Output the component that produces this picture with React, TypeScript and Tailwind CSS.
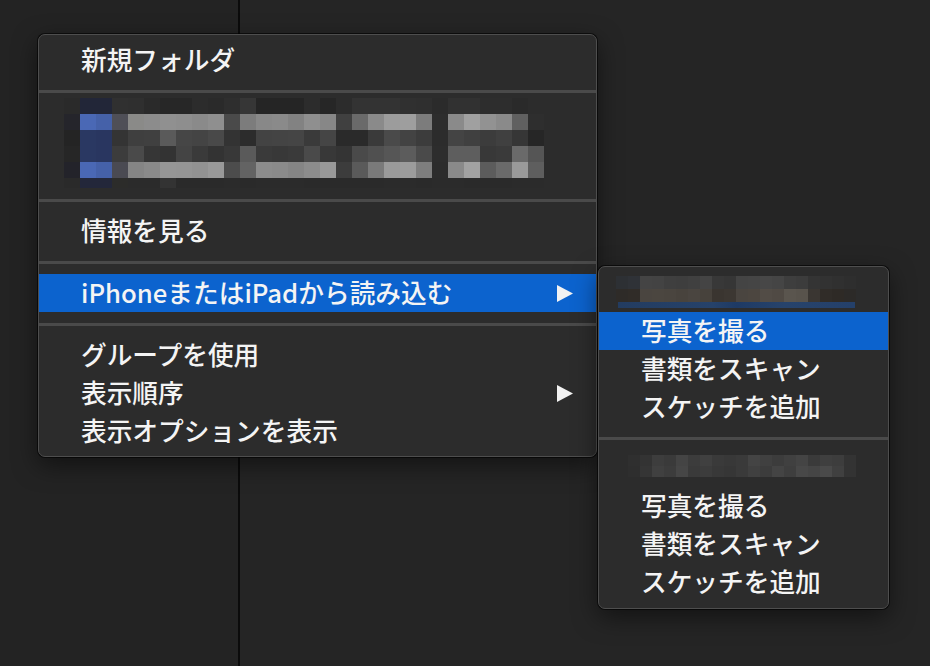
import React from "react";

const mainMosaic: string[][] = [
  ['#2a2a2a','#222638','#222638','#303030','#2f2f2f','#2a2a2a','#272727','#272727','#2c2c2c','#2a2a2a','#2e2e2e','#363636','#252525','#252525','#252525','#2c2c2c','#262626','#2c2c2c','#333333','#333333','#333333','#303030','#2f2f2f','#2b2b2b','#313131','#313131','#2d2d2d','#2d2d2d','#2a2a2a','#2c2c2c'],
  ['#25252b','#4a68b5','#4561a9','#4f4f57','#8a8a88','#8c8c8c','#909090','#8e8e8e','#8a8a8a','#8f8f8f','#4a4a4a','#7c7c7c','#888888','#8a8a8a','#828282','#8f8f8f','#878787','#404040','#6a6a6a','#8a8a8a','#9c9c9c','#9e9e9e','#7c7c7c','#2d2d2d','#8a8a8a','#a0a0a0','#929292','#8a8a8a','#606060','#2e2e2e'],
  ['#242424','#2a3862','#293660','#343434','#3f3f3f','#404040','#5a5a5a','#464646','#444444','#494949','#333333','#2c2c2c','#434343','#444444','#454545','#3a3a3a','#454545','#2a2a2a','#2a2a2a','#3a3a3a','#4a4a4a','#434343','#3c3c3c','#2c2c2c','#444444','#404040','#3c3c3c','#404040','#363636','#262626'],
  ['#262626','#2a3862','#293660','#3c3c3c','#4a4a4a','#363636','#333333','#444444','#3a3a3a','#333333','#383838','#5a5a5a','#3a3a3a','#383838','#3a3a3a','#4a4a4a','#383838','#343434','#4a4a4a','#505050','#565656','#5c5c5c','#4a4a4a','#2d2d2d','#5e5e5e','#5e5e5e','#383838','#3a3a3a','#6a6a6a','#555555'],
  ['#23232a','#4a68b5','#4561a9','#4a4a52','#858585','#8a8a8a','#969696','#959595','#929292','#999999','#4c4c4c','#636363','#8c8c8c','#8a8a8a','#858585','#8c8c8c','#999999','#3c3c3c','#5a5a5a','#7a7a7a','#9a9a9a','#9c9c9c','#7e7e7e','#2c2c2c','#8a8a8a','#a2a2a2','#5c5c5c','#6a6a6a','#9a9a9a','#5e5e5e'],
  ['#2a2a2a','#23273a','#23273a','#2c2c2a','#2b2b2b','#2b2b2b','#333333','#2a2a2a','#2a2a2a','#2a2a2a','#2b2b2b','#2a2a2a','#2b2b2b','#2b2b2b','#2b2b2b','#2a2a2a','#2a2a2a','#2a2a2a','#2a2a2a','#2a2a2a','#2b2b2b','#2b2b2b','#2a2a2a','#2b2b2b','#2b2b2b','#2a2a2a','#2a2a2a','#2a2a2a','#2b2b2b','#2b2b2b'],
];

const sub1Mosaic: string[][] = [
  ['#2d3034','#2f3237','#444444','#434343','#3f3f3f','#3e3e3e','#404040','#444444','#383838','#363636','#444444','#454545','#474747','#454545','#3e3e3e','#3c3c3c','#343434','#323232','#303030','#2e2e2e'],
  ['#2e2b28','#302c28','#4a4540','#4b4640','#4a453f','#48433d','#4a4540','#47423c','#3a3530','#3c3732','#4a4540','#4c4640','#524c46','#504a44','#5a554e','#58534c','#3a3632','#302c28','#2e2a26','#2c2a28'],
];

const sub2Mosaic: string[][] = [
  ['#2f2f2f','#333333','#3d3d3d','#3a3a3a','#444444','#3c3c3c','#404040','#3a3a3a','#383838','#3a3a3a','#444444','#404040','#3c3c3c','#404040','#444444','#3a3a3a','#3f3f3f','#3d3d3d','#333333'],
  ['#2e2e2e','#353535','#404040','#3c3c3c','#464646','#3a3a3a','#3c3c3c','#383838','#363636','#3a3a3a','#404040','#3c3c3c','#444444','#3e3e3e','#484848','#454545','#4a4a4a','#404040','#333333'],
];

function Mosaic({
  data,
  cw,
  ch,
  width,
  height,
  offsetY = 0,
}: {
  data: string[][];
  cw: number;
  ch: number;
  width: number;
  height: number;
  offsetY?: number;
}) {
  return (
    <svg width={width} height={height} viewBox={`0 0 ${width} ${height}`} className="block">
      {data.map((row, r) =>
        row.map((c, i) => (
          <rect key={`${r}-${i}`} x={i * cw} y={offsetY + r * ch} width={cw} height={ch} fill={c} />
        ))
      )}
    </svg>
  );
}

function Arrow() {
  return (
    <svg width="16" height="17" viewBox="0 0 16 17" className="block">
      <polygon points="0,0 16,8.5 0,17" fill="#f2f2f2" />
    </svg>
  );
}

function Item({
  label,
  active = false,
  arrow = false,
}: {
  label: string;
  active?: boolean;
  arrow?: boolean;
}) {
  return (
    <div
      className={`flex h-[38px] items-center justify-between pl-[42px] pr-[23px] ${
        active ? "bg-[#0c63ce]" : ""
      }`}
    >
      <span className="-mt-[2px] whitespace-nowrap leading-none">{label}</span>
      {arrow && <Arrow />}
    </div>
  );
}

function Sep({ pb = 10 }: { pb?: number }) {
  return (
    <div className={pb === 3 ? "pt-[11px] pb-[3px]" : pb === 9 ? "pt-[11px] pb-[9px]" : "pt-[11px] pb-[10px]"}>
      <div className="h-[3px] bg-[#4a4a4a]" />
    </div>
  );
}

export default function App() {
  return (
    <div className="relative flex h-[666px] w-[930px] overflow-hidden font-['Noto_Sans_CJK_JP','Noto_Sans',sans-serif] text-[25.7px] font-medium text-[#f4f4f4]">
      <div className="w-[238px] bg-[#232323]" />
      <div className="w-[2px] bg-[#0b0b0b]" />
      <div className="flex-1 bg-[#252525]" />

      {/* Main context menu */}
      <div className="absolute left-[38px] top-[34px] w-[559px] rounded-[7px] border border-[#4e4e4e] bg-[#2c2c2c] pt-[6px] pb-[6px] shadow-[0_0_0_1px_rgba(0,0,0,0.6),0_8px_24px_rgba(0,0,0,0.5)]">
        <Item label="新規フォルダ" />
        <Sep pb={3} />
        <div className="h-[92px] overflow-hidden pl-[25px]">
          <Mosaic data={mainMosaic} cw={16} ch={16} width={480} height={92} offsetY={2} />
        </div>
        <Sep />
        <Item label="情報を見る" />
        <Sep />
        <Item label="iPhoneまたはiPadから読み込む" active arrow />
        <Sep />
        <Item label="グループを使用" />
        <Item label="表示順序" arrow />
        <Item label="表示オプションを表示" />
      </div>

      {/* Submenu */}
      <div className="absolute left-[598px] top-[266px] w-[291px] rounded-[7px] border border-[#4e4e4e] bg-[#2c2c2c] pt-[6px] pb-[7px] shadow-[0_0_0_1px_rgba(0,0,0,0.6),0_8px_24px_rgba(0,0,0,0.5)]">
        <div className="h-[39px] pl-[17px] pt-[3px]">
          <Mosaic data={sub1Mosaic} cw={12} ch={13} width={240} height={26} />
          <div className="ml-[2px] h-[6px] w-[237px] bg-[linear-gradient(90deg,#233c60,#26426a_40%,#1e3a64_50%,#27436b_70%,#24406a)]" />
        </div>
        <Item label="写真を撮る" active />
        <Item label="書類をスキャン" />
        <Item label="スケッチを追加" />
        <Sep pb={9} />
        <div className="h-[38px] pl-[29px] pt-[6px]">
          <Mosaic data={sub2Mosaic} cw={12} ch={11} width={228} height={22} />
        </div>
        <Item label="写真を撮る" />
        <Item label="書類をスキャン" />
        <Item label="スケッチを追加" />
      </div>
    </div>
  );
}
